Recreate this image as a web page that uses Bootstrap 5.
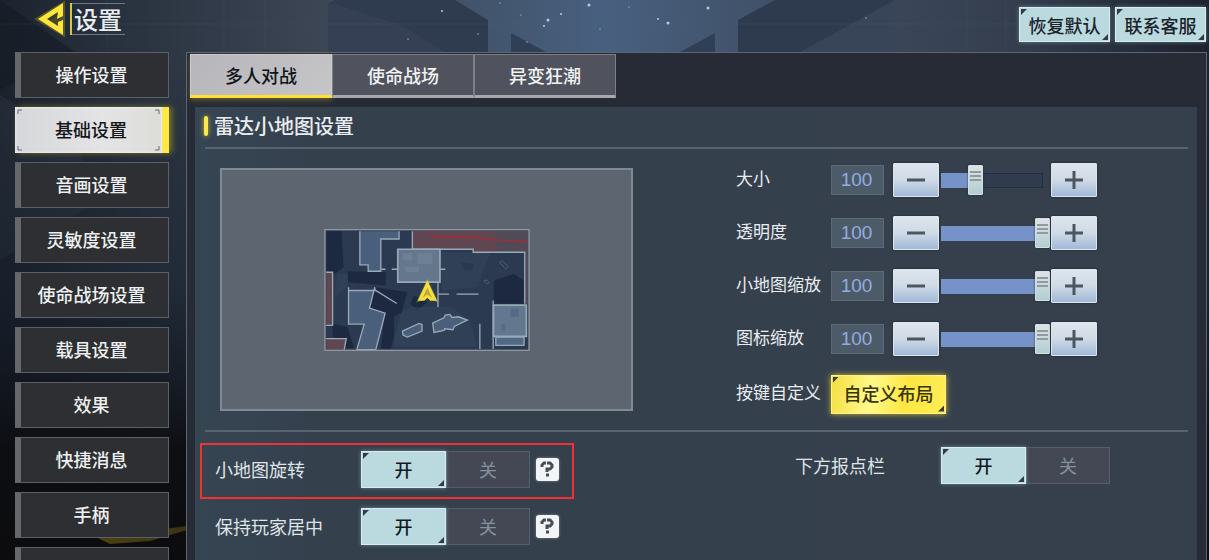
<!DOCTYPE html>
<html lang="zh-CN">
<head>
<meta charset="utf-8">
<meta name="viewport" content="width=device-width, initial-scale=1">
<title>设置</title>
<link href="https://cdn.jsdelivr.net/npm/bootstrap@5.3.0/dist/css/bootstrap.min.css" rel="stylesheet">
<style>
  :root { --ice: #badadf; --line: #57636f; --sun: #ffe84a; }
  body { background: #10141c; color: #e9edf1; font-family: "Noto Sans CJK SC", "Liberation Sans", sans-serif; font-size: 18px; line-height: 24px; }
  .game { height: 100vh; position: relative; overflow: hidden; }
  .scene { position: absolute; inset: 0; width: 100%; height: 100%; }
  .topbar { height: 52px; padding: 0 3px 0 36px; position: relative; }
  .brand { padding-top: 3px; gap: 6px; }
  .back { border: 0; background: none; padding: 0; color: #fff; line-height: 0; align-self: flex-start; }
  .heading { font-size: 24px; line-height: 30px; font-weight: 500; border: solid #6d7882; border-width: 1px 0; padding: 0 3px 0 2px; margin: 0; }
  .title-box { border-left: 2px solid #d9c63c; height: 32px; }
  .top-actions { padding-top: 7px; gap: 5px; }

  .cut { position: relative; border-radius: 0; border: 1px solid #d3edf0; background: var(--ice); color: #1d232b; font-size: 18px; line-height: 24px; font-weight: 500; box-shadow: 0 0 4px #a9cdd480; --bs-btn-hover-color: #1d232b; }
  .cut::before, .cut::after, .btn-check:checked + .choice::before, .btn-check:checked + .choice::after { content: ""; position: absolute; width: 6px; height: 6px; background: #343b44; }
  .cut::before, .btn-check:checked + .choice::before { left: 1px; top: 1px; clip-path: polygon(0 0, 100% 0, 0 100%); }
  .cut::after, .btn-check:checked + .choice::after { right: 1px; bottom: 1px; clip-path: polygon(100% 0, 100% 100%, 0 100%); }
  .top-btn { width: 91px; height: 35px; padding: 0; white-space: nowrap; }

  .stage { position: relative; padding: 0 2px 0 15px; }
  .side { width: 154px; gap: 9px; }
  .side-link { height: 46px; border: 1px solid #5c6066; border-left: 6px solid #65676b; background: #2d2f32; color: #edeff1; text-decoration: none; font-weight: 500; padding: 0 6px 3px 0; display: flex; align-items: center; justify-content: center; }
  .side-link.active { position: relative; background: linear-gradient(90deg, #d6d7da, #e4e4e6 60%, #dcdcd8); color: #14161a; border: 0; border-right: 7px solid #ffea45; padding: 0 0 3px 5px; box-shadow: 3px 0 6px #c9b82680, inset 0 0 3px #fff; }
  .corners { position: absolute; inset: 2px; }

  .frame { margin-left: 17px; border: 1px solid #5d6671; border-bottom: 0; background: #262b36; padding: 1px 9px 0 3px; min-width: 0; }
  .tab-btn { width: 142px; height: 44px; padding: 0 0 1px; border: 1px solid #7b7f88; border-bottom: 3px solid #a7a9ae; background: #50535e; color: #f0f2f4; font-weight: 500; border-radius: 0; }
  .tab-btn.active { background: linear-gradient(135deg, #b6b6ba, #c6c6c9); color: #111418; border-color: #cbcbce; border-bottom-color: #ffe133; box-shadow: 0 2px 5px #a08f2e80; }
  .sheet { margin: 9px 0 0 5px; padding: 0 9px 0 10px; background: linear-gradient(90deg, #364552, #35404d 12%, #35404c); }
  .section-title { height: 42px; border-bottom: 2px solid var(--line); padding-bottom: 3px; }
  .section-title h2 { font-size: 20px; line-height: 26px; font-weight: 500; margin: 0; }
  .tick { width: 4px; height: 20px; margin: 0 6px 0 -1px; border-radius: 2px; background: var(--sun); box-shadow: 0 0 5px #c8b636; }

  .halves { display: grid; grid-template-columns: 531fr 452fr; }
  .upper { height: 283px; border-bottom: 2px solid var(--line); }
  .map-side { padding: 19px 103px 19px 15px; }
  .map-box { height: 243px; background: #5d6570; border: 2px solid #7e8b94; }

  .sliders { padding-top: 4px; }
  .dial { height: 53px; }
  .dial-name { width: 95px; font-size: 17px; white-space: nowrap; padding-bottom: 4px; }
  .dial-value { width: 53px; height: 30px; margin-right: 9px; padding: 1px 2px 0 0; border: 1px solid #5b6a77; background: #4d5b68; color: #91ace0; text-align: center; font: 19px "Liberation Sans", sans-serif; }
  .step { width: 46px; height: 34px; padding: 0; border: 1px solid #dde6ef; border-radius: 1px; background: linear-gradient(#dde5ed, #cfdae6 50%, #a1b9d8); line-height: 0; box-shadow: 0 0 2px #141b26; }
  .slide { appearance: none; -webkit-appearance: none; width: 109px; height: 30px; margin: 0 1px 0 2px; padding: 0; background:
      linear-gradient(#7592c9, #7592c9) 0 8px / var(--fill) 15px no-repeat,
      linear-gradient(#303c4d, #303c4d) 1px 9px / 100px 13px no-repeat,
      linear-gradient(#232e40, #232e40) 0 8px / 102px 15px no-repeat; }
  .slide::-webkit-slider-thumb { -webkit-appearance: none; width: 15px; height: 30px; border: 1px solid #d3dfe1; border-radius: 1px; box-shadow: 0 0 2px #1b2634; background:
      linear-gradient(#929a9e, #929a9e) 1px 5px / 11px 2px no-repeat,
      linear-gradient(#929a9e, #929a9e) 1px 9px / 11px 2px no-repeat,
      linear-gradient(#929a9e, #929a9e) 1px 13px / 11px 2px no-repeat,
      linear-gradient(#dde2e5, #b1ced2); }
  .dial.custom { height: 58px; }
  .gold { width: 115px; height: 39px; padding: 0 0 2px; border-color: #fff08a; color: #38340e; background: linear-gradient(100deg, #f3df42, #fff989 35%, #ffe741 65%, #ffed55); box-shadow: 0 0 6px #c7b83a; white-space: nowrap; }

  .lower { padding-top: 11px; }
  .option { height: 57px; padding-left: 10px; padding-bottom: 4px; color: #dfe4e8; }
  .option.marked { width: 374px; height: 56px; margin: 0 0 1px -5px; padding: 0 0 3px 13px; border: 2px solid #f03232; }
  .option-name { width: 146px; white-space: nowrap; padding-bottom: 2px; }
  .choice { width: 84px; height: 37px; padding: 5px 0; border-radius: 0; border: 1px solid #545d69; background: #434854; color: #86919c; font-size: 18px; line-height: 24px; font-weight: 400; position: relative; }
  .btn-check:checked + .choice { width: 85px; background: var(--ice); border-color: #d3edf0; color: #15191e; font-weight: 500; box-shadow: 0 0 4px #a9cdd480; z-index: 1; }
  .help { width: 23px; height: 23px; margin-left: 6px; padding: 0; border: 0; border-radius: 3px; background: #f3f4f5; line-height: 0; box-shadow: 0 0 3px #ffffff60; }
  .right-option { padding: 4px 0 0 59px; }
  .right-option .option { padding: 0 0 20px; }
</style>
</head>
<body>
<div class="game d-flex flex-column">
  <svg class="scene" viewBox="0 0 1209 560" preserveAspectRatio="none" aria-hidden="true">
    <defs>
      <linearGradient id="sky" x1="0" x2="1" y1="0" y2="0">
        <stop offset="0" stop-color="#1c232e"/><stop offset=".12" stop-color="#2b3542"/><stop offset=".27" stop-color="#3c4655"/>
        <stop offset=".5" stop-color="#48607f"/><stop offset=".7" stop-color="#3d495d"/><stop offset=".85" stop-color="#333d4d"/><stop offset="1" stop-color="#1d222e"/>
      </linearGradient>
      <linearGradient id="dusk" x1="0" x2="0" y1="0" y2="1">
        <stop offset=".1" stop-color="#0d0f15" stop-opacity="0"/><stop offset=".5" stop-color="#131b28" stop-opacity=".45"/><stop offset=".8" stop-color="#0c0d11" stop-opacity=".95"/><stop offset="1" stop-color="#0c0c0e"/>
      </linearGradient>
      <linearGradient id="streak" x1="0" x2="1"><stop offset="0" stop-color="#4a4214"/><stop offset="1" stop-color="#3a3411"/></linearGradient>
    </defs>
    <rect width="1209" height="560" fill="url(#sky)"/>
    <path d="M0 0L75 52L0 90Z" fill="#141a25" opacity=".6"/>
    <path d="M0 95L75 140L100 200L0 260Z" fill="#3b4655" opacity=".3"/>
    <path d="M328 4L335 0H455L488 20V52H328Z" fill="#2f3b4e"/>
    <path d="M400 25L445 52H328V4H335Z" fill="#3c4558" opacity=".6"/>
    <path d="M738 20L775 0H895V52H738Z" fill="#2e3b4e"/>
    <path d="M895 0L800 52H895Z" fill="#3b485b" opacity=".8"/>
    <path d="M511 33L546 52H511ZM715 33L680 52H715Z" fill="#2f3f55"/>
    <path d="M0 24H1209M107 0V52M224 0V52M265 0V52M967 0V52M1006 0V52" stroke="#6288a5" stroke-opacity=".1"/>
    <g fill="#b9cbd8"><circle cx="589" cy="5" r="1.5"/><circle cx="548" cy="20" r="1.5"/><circle cx="561" cy="14" r="1"/><circle cx="544" cy="26" r="1"/><circle cx="708" cy="8" r="1.5"/><circle cx="668" cy="23" r="1.5"/><circle cx="658" cy="19" r="1"/><circle cx="442" cy="11" r="1"/></g>
    <g fill="#8298ad" opacity=".7"><circle cx="521" cy="15" r="1"/><circle cx="527" cy="42" r="1"/><circle cx="478" cy="34" r="1"/><circle cx="408" cy="39" r="1"/><circle cx="500" cy="3" r="1"/><circle cx="629" cy="7" r="1"/><circle cx="866" cy="18" r="1"/><circle cx="600" cy="29" r="1"/></g>
    <rect width="1209" height="560" fill="url(#dusk)"/>
    <path d="M98 538L187 526V530L150 541L110 544Z" fill="url(#streak)"/>
  </svg>

  <header class="topbar d-flex justify-content-between flex-shrink-0">
    <div class="brand d-flex">
      <button class="back" type="button" aria-label="返回">
        <svg width="28" height="32" viewBox="0 0 28 32" overflow="visible">
          <path d="M2 16L27 1V31Z" fill="#6b6420" opacity=".5" stroke="#8d8128" stroke-width="4"/>
          <path d="M2 16L27 0V13L21 16L22 9L11 16L22 23V19L27 17V32Z" fill="#ffe63a"/>
          <path d="M12 16L21 10V12L16 17Z" fill="#3a3d2c"/>
        </svg>
      </button>
      <div class="title-box">
        <h1 class="heading">设置</h1>
      </div>
    </div>
    <div class="top-actions d-flex">
      <button class="btn cut top-btn" type="button">恢复默认</button>
      <button class="btn cut top-btn" type="button">联系客服</button>
    </div>
  </header>

  <div class="stage d-flex flex-grow-1">
    <nav class="side d-flex flex-column flex-shrink-0" aria-label="设置分类">
      <a class="side-link flex-shrink-0" href="#">操作设置</a>
      <a class="side-link flex-shrink-0 active" href="#" aria-current="page">基础设置
        <svg class="corners" width="143" height="42" viewBox="0 0 143 42" fill="none" stroke="#6b6d72" aria-hidden="true"><path d="M1 5V1H5M138 1H142V5M1 37V41H5M138 41H142V37"/></svg></a>
      <a class="side-link flex-shrink-0" href="#">音画设置</a>
      <a class="side-link flex-shrink-0" href="#">灵敏度设置</a>
      <a class="side-link flex-shrink-0" href="#">使命战场设置</a>
      <a class="side-link flex-shrink-0" href="#">载具设置</a>
      <a class="side-link flex-shrink-0" href="#">效果</a>
      <a class="side-link flex-shrink-0" href="#">快捷消息</a>
      <a class="side-link flex-shrink-0" href="#">手柄</a>
      <a class="side-link flex-shrink-0" href="#" aria-label="更多"></a>
    </nav>

    <main class="frame flex-grow-1 d-flex flex-column">
      <div class="d-flex" role="tablist">
        <button class="tab-btn active" type="button" role="tab" aria-selected="true">多人对战</button>
        <button class="tab-btn" type="button" role="tab" aria-selected="false">使命战场</button>
        <button class="tab-btn" type="button" role="tab" aria-selected="false">异变狂潮</button>
      </div>

      <div class="sheet flex-grow-1">
        <div class="section-title d-flex align-items-center">
          <span class="tick"></span><h2>雷达小地图设置</h2>
        </div>

        <div class="upper halves">
          <div class="map-side">
            <div class="map-box d-flex align-items-center justify-content-center">
              <svg width="206" height="122" viewBox="40 25 618 367" role="img" aria-label="小地图预览">
                <defs>
                  <pattern id="hatch" width="14" height="14" patternUnits="userSpaceOnUse" patternTransform="rotate(-45)"><rect width="14" height="14" fill="#574a55"/><rect width="4" height="14" fill="#743f49"/></pattern>
                </defs>
                <rect x="43" y="28" width="612" height="361" fill="#2b3a50"/>
                <g fill="#1d2940">
                  <path d="M46 32H92L98 140L70 160L46 150Z"/><path d="M110 152L225 155V195L112 185Z"/><path d="M192 200L290 215L240 385H210L222 278L175 262Z"/><path d="M550 180L610 160L640 180V250H550Z"/><path d="M450 125L490 130L485 148L462 150Z"/><path d="M65 310L110 320L130 384H100V355L65 350Z"/><path d="M310 225L350 245L320 270L300 250Z"/>
                </g>
                <g fill="#32455c" opacity=".6"><path d="M250 290L300 260L420 260L480 300L500 380H250Z"/><path d="M390 95H540L500 200L395 210Z"/><path d="M80 160H110V200L70 230Z"/></g>
                <path d="M305 30H655V250H643V95H488V86H305Z" fill="url(#hatch)"/>
                <path d="M560 30H655V250H645V95H560Z" fill="#4b4b58" opacity=".7"/>
                <path d="M46 155H65V315H46ZM46 355H106L100 388H46Z" fill="url(#hatch)"/>
                <g fill="#4a5f7b" stroke="#98a9b7" stroke-width="4">
                  <path d="M147 32V133H172V152H210V55H265V32"/>
                  <path d="M113 200V311H160L138 388H195L223 278L176 263L192 200V210H113"/>
                  <path d="M275 332L325 309L334 312V332L290 350L277 344Z"/>
                  <path d="M366 308L400 292L404 284L418 282L424 291L444 289L470 299L431 318L427 328L402 325L400 330L370 336Z"/>
                </g>
                <path d="M261 86H388V185H261Z" fill="#65778d" stroke="#98a9b7" stroke-width="5"/>
                <path d="M277 98H305V120H277ZM320 98H365V130H320ZM285 138H325V155H285Z" fill="#6e8094"/>
                <path d="M549 254H648V348H549Z" fill="#63788f" stroke="#98a9b7" stroke-width="5"/>
                <path d="M556 350H641V375H556Z" fill="#506985" stroke="#98a9b7" stroke-width="4"/>
                <path d="M600 265H625V290H600ZM573 310H584V330H573Z" fill="#566a83"/>
                <g fill="none" stroke="#98a9b7" stroke-width="4">
                  <path d="M305 32V86H488V95H643V250M46 155H65V315H46M46 355H106L100 388M192 208L258 249M243 146H261M388 146H404M212 146H224M382 186V260M382 221H415M438 221H504M508 310V386M548 240V386"/>
                </g>
                <path d="M567 125L575 120L594 138L587 146ZM520 181L528 178L536 186L530 191Z" fill="none" stroke="#5b7084" stroke-width="2"/>
                <path d="M357 34L375 49H480L530 56L650 64" fill="none" stroke="#a52c38" stroke-width="4"/>
                <path d="M350 182L322 241L350 230L378 241Z" fill="#ffe83c" stroke="#ffe83c" stroke-width="6" opacity=".3"/>
                <path d="M350 180L321 241H341L350 232L359 241H379Z" fill="#f4df3b"/>
                <path d="M350 201L336 232L350 222L364 232Z" fill="#b9a83b"/>
                <rect x="42" y="27" width="614" height="363" fill="none" stroke="#8e979f" stroke-width="4"/>
              </svg>
            </div>
          </div>

          <div class="sliders">
            <div class="dial d-flex align-items-center">
              <label class="dial-name" for="r1">大小</label>
              <input class="dial-value" type="text" value="100" aria-label="大小数值">
              <button class="step" type="button" aria-label="减小"><svg width="18" height="18" viewBox="0 0 18 18"><path d="M0 9H18" stroke="#4c5661" stroke-width="3"/></svg></button>
              <input class="slide" id="r1" type="range" min="0" max="100" value="29" style="--fill:30%">
              <button class="step" type="button" aria-label="增大"><svg width="18" height="18" viewBox="0 0 18 18"><path d="M0 9H18M9 0V18" stroke="#4c5661" stroke-width="3"/></svg></button>
            </div>
            <div class="dial d-flex align-items-center">
              <label class="dial-name" for="r2">透明度</label>
              <input class="dial-value" type="text" value="100" aria-label="透明度数值">
              <button class="step" type="button" aria-label="减小"><svg width="18" height="18" viewBox="0 0 18 18"><path d="M0 9H18" stroke="#4c5661" stroke-width="3"/></svg></button>
              <input class="slide" id="r2" type="range" min="0" max="100" value="100" style="--fill:90%">
              <button class="step" type="button" aria-label="增大"><svg width="18" height="18" viewBox="0 0 18 18"><path d="M0 9H18M9 0V18" stroke="#4c5661" stroke-width="3"/></svg></button>
            </div>
            <div class="dial d-flex align-items-center">
              <label class="dial-name" for="r3">小地图缩放</label>
              <input class="dial-value" type="text" value="100" aria-label="小地图缩放数值">
              <button class="step" type="button" aria-label="减小"><svg width="18" height="18" viewBox="0 0 18 18"><path d="M0 9H18" stroke="#4c5661" stroke-width="3"/></svg></button>
              <input class="slide" id="r3" type="range" min="0" max="100" value="100" style="--fill:90%">
              <button class="step" type="button" aria-label="增大"><svg width="18" height="18" viewBox="0 0 18 18"><path d="M0 9H18M9 0V18" stroke="#4c5661" stroke-width="3"/></svg></button>
            </div>
            <div class="dial d-flex align-items-center">
              <label class="dial-name" for="r4">图标缩放</label>
              <input class="dial-value" type="text" value="100" aria-label="图标缩放数值">
              <button class="step" type="button" aria-label="减小"><svg width="18" height="18" viewBox="0 0 18 18"><path d="M0 9H18" stroke="#4c5661" stroke-width="3"/></svg></button>
              <input class="slide" id="r4" type="range" min="0" max="100" value="100" style="--fill:90%">
              <button class="step" type="button" aria-label="增大"><svg width="18" height="18" viewBox="0 0 18 18"><path d="M0 9H18M9 0V18" stroke="#4c5661" stroke-width="3"/></svg></button>
            </div>
            <div class="dial custom d-flex align-items-center">
              <label class="dial-name" for="layout">按键自定义</label>
              <button class="btn cut gold" id="layout" type="button">自定义布局</button>
            </div>
          </div>
        </div>

        <div class="lower halves">
          <div>
            <div class="option marked d-flex align-items-center" role="radiogroup" aria-labelledby="n1">
              <span class="option-name" id="n1">小地图旋转</span>
              <input class="btn-check" type="radio" name="rotate" id="rot-on" checked><label class="btn choice" for="rot-on">开</label>
              <input class="btn-check" type="radio" name="rotate" id="rot-off"><label class="btn choice" for="rot-off">关</label>
              <button class="help" type="button" aria-label="帮助"><svg width="15" height="17" viewBox="0 0 15 17" fill="none" stroke="#464d56" stroke-width="3"><path d="M2 6V4L4 2H6M7 2H10L12 4V6L10 8H7V11M6 14H9"/></svg></button>
            </div>
            <div class="option d-flex align-items-center" role="radiogroup" aria-labelledby="n2">
              <span class="option-name" id="n2">保持玩家居中</span>
              <input class="btn-check" type="radio" name="center" id="cen-on" checked><label class="btn choice" for="cen-on">开</label>
              <input class="btn-check" type="radio" name="center" id="cen-off"><label class="btn choice" for="cen-off">关</label>
              <button class="help" type="button" aria-label="帮助"><svg width="15" height="17" viewBox="0 0 15 17" fill="none" stroke="#464d56" stroke-width="3"><path d="M2 6V4L4 2H6M7 2H10L12 4V6L10 8H7V11M6 14H9"/></svg></button>
            </div>
          </div>
          <div class="right-option">
            <div class="option d-flex align-items-center" role="radiogroup" aria-labelledby="n3">
              <span class="option-name" id="n3">下方报点栏</span>
              <input class="btn-check" type="radio" name="bar" id="bar-on" checked><label class="btn choice" for="bar-on">开</label>
              <input class="btn-check" type="radio" name="bar" id="bar-off"><label class="btn choice" for="bar-off">关</label>
            </div>
          </div>
        </div>
      </div>
    </main>
  </div>
</div>
<script src="https://cdn.jsdelivr.net/npm/bootstrap@5.3.0/dist/js/bootstrap.bundle.min.js"></script>
</body>
</html>
